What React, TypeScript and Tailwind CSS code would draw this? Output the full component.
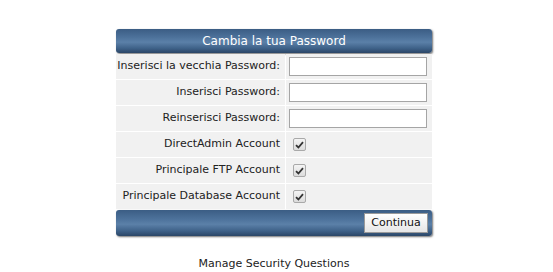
import React from "react";

const FONT = { fontFamily: '"DejaVu Sans", Verdana, sans-serif' };

type Row = { label: string; kind: "input" | "check" };

const ROWS: Row[] = [
  { label: "Inserisci la vecchia Password:", kind: "input" },
  { label: "Inserisci Password:", kind: "input" },
  { label: "Reinserisci Password:", kind: "input" },
  { label: "DirectAdmin Account", kind: "check" },
  { label: "Principale FTP Account", kind: "check" },
  { label: "Principale Database Account", kind: "check" },
];

function Check() {
  return (
    <span className="flex h-[13px] w-[13px] items-center justify-center rounded-[2px] border border-[#a9a9a9] bg-gradient-to-b from-[#f4f4f4] to-[#dcdcdc]">
      <svg width="9" height="8" viewBox="0 0 9 8">
        <path d="M1 4.2 L3.4 6.5 L8 1.2" fill="none" stroke="#333" strokeWidth="1.8" />
      </svg>
    </span>
  );
}

const BAR =
  "bg-[linear-gradient(to_bottom,#3b5d84_0%,#4d729b_35%,#5b80a8_55%,#3f6289_80%,#2b4667_100%)] rounded-[3px] shadow-[1px_1px_2px_rgba(0,0,0,0.55)]";

export default function App() {
  return (
    <div className="flex min-h-[272px] w-full flex-col items-center bg-white pt-[29px] text-[11px] text-[#222]" style={FONT}>
      <div className="mr-[5px] flex w-[316px] flex-col">
        <div className={`${BAR} flex h-[24px] items-center justify-center text-[12px] text-white`}>
          Cambia la tua Password
        </div>

        <div className="mt-[1px] flex flex-col gap-[1px]">
          {ROWS.map((r) => (
            <div key={r.label} className="flex h-[25px] gap-[1px]">
              <div className="flex w-[169px] items-center justify-end bg-[#f1f1f1] pr-[5px] whitespace-nowrap">
                {r.label}
              </div>
              <div className="flex flex-1 items-center bg-[#f1f1f1] pl-[3px]">
                {r.kind === "input" ? (
                  <input
                    type="password"
                    className="h-[19px] w-[138px] border border-[#a5a5a5] bg-white outline-none"
                  />
                ) : (
                  <span className="pl-[4px]">
                    <Check />
                  </span>
                )}
              </div>
            </div>
          ))}
        </div>

        <div className={`${BAR} mt-[1px] flex h-[26px] items-center justify-end pr-[4px]`}>
          <button className="h-[20px] w-[64px] border border-[#9a9a9a] bg-gradient-to-b from-white to-[#e6e6e6] text-[11px] text-[#111]">
            Continua
          </button>
        </div>
      </div>

      <div className="mt-[20px] mr-[5px] text-[11px] text-[#222]">Manage Security Questions</div>
    </div>
  );
}
